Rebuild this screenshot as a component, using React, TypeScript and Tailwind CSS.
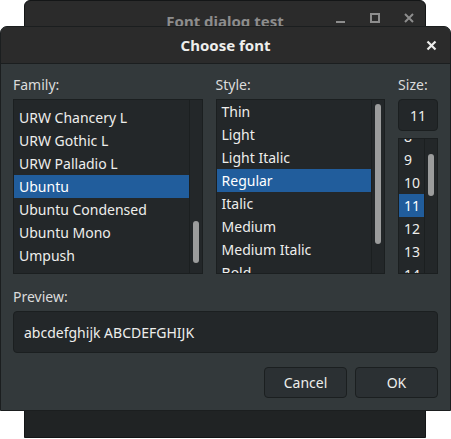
import type { ReactNode } from "react"

const families = [
  "URW Bookman L",
  "URW Chancery L",
  "URW Gothic L",
  "URW Palladio L",
  "Ubuntu",
  "Ubuntu Condensed",
  "Ubuntu Mono",
  "Umpush",
  "Unikurd Web",
]
const styles = ["Thin", "Light", "Light Italic", "Regular", "Italic", "Medium", "Medium Italic", "Bold"]
const sizes = ["8", "9", "10", "11", "12", "13", "14"]

function ListBox({
  items,
  selected,
  offset,
  thumb,
  className,
}: {
  items: string[]
  selected: string
  offset: string
  thumb: string
  className: string
}) {
  return (
    <div className={`flex shrink-0 overflow-hidden border border-[#1b1f20] bg-[#232729] ${className}`}>
      <div className="flex-1 overflow-hidden">
        <div className={offset}>
          {items.map((item) => (
            <div
              key={item}
              className={`h-[23px] truncate pl-[5px] leading-[23px] ${
                item === selected ? "bg-[#215d9c] text-white" : "text-[#eeeeec]"
              }`}
            >
              {item}
            </div>
          ))}
        </div>
      </div>
      <div className="w-[13px] border-l border-[#1b1f20] bg-[#232729]">
        <div className={`mx-auto w-[6px] rounded-full bg-[#9b9c9c] ${thumb}`} />
      </div>
    </div>
  )
}

function Label({ children }: { children: ReactNode }) {
  return <div className="h-[24px] shrink-0 leading-[20px] text-[#dcdcdc]">{children}</div>
}

export default function App() {
  return (
    <div
      className="relative h-[439px] w-[451px] overflow-hidden bg-white text-[14px]"
      style={{ fontFamily: '"Noto Sans", "Open Sans", sans-serif' }}
    >
      {/* back window */}
      <div className="absolute left-[24px] top-0 flex h-[438px] w-[402px] flex-col rounded-t-[6px] border border-[#141617] bg-[#202324]">
        <div className="relative flex h-[40px] items-center justify-center rounded-t-[6px] bg-[#2b2b2b]">
          <span className="text-[15px] font-bold text-[#8d8d8d]">Font dialog test</span>
          <div className="absolute right-[10px] top-[11px] flex items-center gap-[22px] text-[#8d8d8d]">
            <svg width="12" height="12" viewBox="0 0 12 12">
              <rect x="1" y="9" width="9" height="2" fill="currentColor" />
            </svg>
            <svg width="12" height="12" viewBox="0 0 12 12">
              <rect x="2" y="2" width="8" height="8" fill="none" stroke="currentColor" strokeWidth="2" />
            </svg>
            <svg width="12" height="12" viewBox="0 0 12 12">
              <path d="M2 2 L10 10 M10 2 L2 10" stroke="currentColor" strokeWidth="2" />
            </svg>
          </div>
        </div>
      </div>

      {/* dialog */}
      <div className="absolute left-0 top-[26px] flex h-[385px] w-[451px] flex-col overflow-hidden rounded-t-[7px] border border-[#1b1e1f] bg-[#33393b]">
        <div className="relative flex h-[37px] shrink-0 items-center justify-center border-b border-[#1b1e1f] bg-[#2b2b2b]">
          <span className="text-[15px] font-bold text-[#eeeeec]">Choose font</span>
          <svg className="absolute right-[13px] top-[13px]" width="11" height="11" viewBox="0 0 11 11">
            <path d="M1.5 1.5 L9.5 9.5 M9.5 1.5 L1.5 9.5" stroke="#eeeeec" strokeWidth="2.2" />
          </svg>
        </div>

        <div className="flex flex-1 flex-col px-[12px] pt-[11px]">
          <div className="flex gap-[13px]">
            <div className="flex w-[190px] flex-col">
              <Label>Family:</Label>
              <ListBox
                items={families}
                selected="Ubuntu"
                offset="-mt-[17px]"
                thumb="mt-[121px] h-[42px]"
                className="h-[175px]"
              />
            </div>
            <div className="flex w-[170px] flex-col">
              <Label>Style:</Label>
              <ListBox
                items={styles}
                selected="Regular"
                offset="mt-0"
                thumb="mt-[4px] h-[140px]"
                className="h-[175px]"
              />
            </div>
            <div className="flex w-[40px] flex-col">
              <Label>Size:</Label>
              <div className="flex h-[32px] shrink-0 items-center justify-center rounded-[4px] border border-[#1b1f20] bg-[#232729] text-[#eeeeec]">
                11
              </div>
              <ListBox
                items={sizes}
                selected="11"
                offset="-mt-[14px]"
                thumb="mt-[15px] h-[42px]"
                className="mt-[7px] h-[136px]"
              />
            </div>
          </div>

          <div className="mt-[13px]">
            <Label>Preview:</Label>
          </div>
          <div className="flex h-[42px] shrink-0 items-center rounded-[4px] border border-[#1b1f20] bg-[#232729] pl-[10px] text-[#eeeeec]">
            abcdefghijk ABCDEFGHIJK
          </div>

          <div className="mt-[14px] flex justify-end gap-[8px]">
            <button className="h-[31px] w-[83px] rounded-[4px] border border-[#1b1f20] bg-[#2b3033] text-[#eeeeec]">
              Cancel
            </button>
            <button className="h-[31px] w-[83px] rounded-[4px] border border-[#1b1f20] bg-[#2b3033] text-[#eeeeec]">
              OK
            </button>
          </div>
        </div>
      </div>
    </div>
  )
}
